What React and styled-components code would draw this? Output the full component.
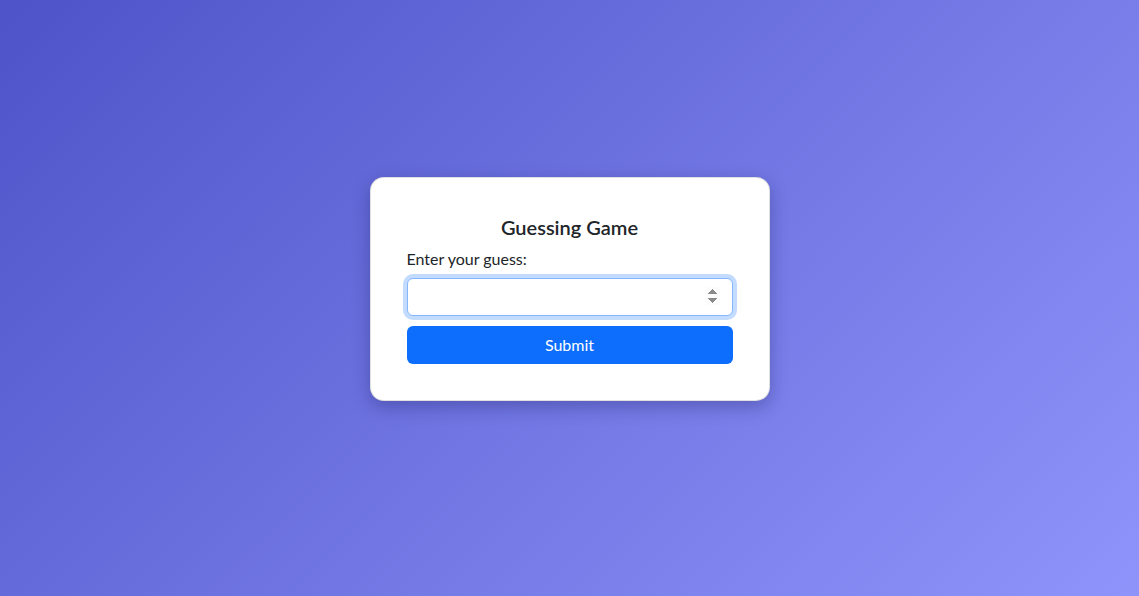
import React from "react";
import styled, { createGlobalStyle } from "styled-components";

const Global = createGlobalStyle`
  html, body { margin: 0; padding: 0; height: 100%; }
  body {
    font-family: "Segoe UI", Lato, "Noto Sans", "Liberation Sans", sans-serif;
    background: linear-gradient(135deg, #4e54c8 0%, #8f94fb 100%);
    min-height: 596px;
  }
  #root { min-height: 596px; }
`;

const Page = styled.div`
  box-sizing: border-box;
  min-height: 596px;
  padding-bottom: 19px;
  display: flex;
  align-items: center;
  justify-content: center;
`;

const Card = styled.div`
  width: 400px;
  box-sizing: border-box;
  background: #fff;
  border-radius: 14px;
  border: 1px solid rgba(0, 0, 0, 0.12);
  box-shadow: 0 6px 18px rgba(20, 20, 80, 0.3);
  padding: 37px 36px 36px;
  display: flex;
  flex-direction: column;
`;

const Title = styled.h4`
  margin: 0 0 8px;
  text-align: center;
  font-size: 20px;
  line-height: 24px;
  font-weight: 600;
  color: #212529;
`;

const Label = styled.label`
  display: block;
  font-size: 16px;
  line-height: 24px;
  color: #212529;
  margin-bottom: 7px;
`;

const Input = styled.input`
  box-sizing: border-box;
  width: 100%;
  height: 38px;
  padding: 6px 12px;
  font-size: 16px;
  font-family: inherit;
  color: #212529;
  background: #fff;
  border: 1px solid #86b7fe;
  border-radius: 6px;
  outline: none;
  box-shadow: 0 0 0 4px rgba(13, 110, 253, 0.25);
  caret-color: #000;

  &::-webkit-inner-spin-button {
    opacity: 1;
  }
`;

const Button = styled.button`
  margin-top: 10px;
  height: 38px;
  width: 100%;
  border: none;
  border-radius: 6px;
  background: #0d6efd;
  color: #fff;
  font-family: inherit;
  font-size: 16px;
  line-height: 24px;
  cursor: pointer;
`;

export default function App() {
  return (
    <>
      <Global />
      <Page>
        <Card>
          <Title>Guessing Game</Title>
          <Label htmlFor="guess">Enter your guess:</Label>
          <Input id="guess" type="number" autoFocus />
          <Button type="button">Submit</Button>
        </Card>
      </Page>
    </>
  );
}
